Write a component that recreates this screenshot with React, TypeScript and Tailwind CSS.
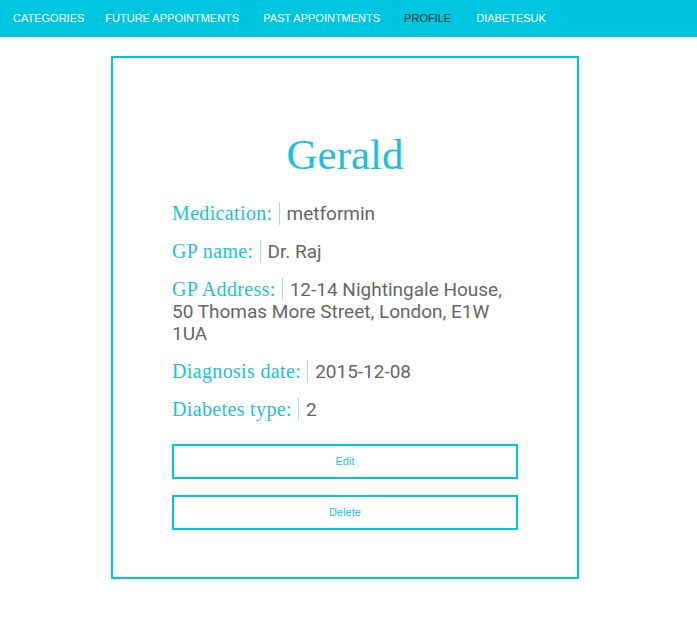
const navItems = [
  { title: "CATEGORIES", active: false, className: "" },
  { title: "FUTURE APPOINTMENTS", active: false, className: "ml-[21px]" },
  { title: "PAST APPOINTMENTS", active: false, className: "ml-[24px]" },
  { title: "PROFILE", active: true, className: "ml-[24px]" },
  { title: "DIABETESUK", active: false, className: "ml-[25px]" },
];

const profile = [
  { label: "Medication:", value: "metformin" },
  { label: "GP name:", value: "Dr. Raj" },
  { label: "GP Address:", value: "12-14 Nightingale House, 50 Thomas More Street, London, E1W 1UA" },
  { label: "Diagnosis date:", value: "2015-12-08" },
  { label: "Diabetes type:", value: "2" },
];

function NavBar() {
  return (
    <nav className="h-[37px] bg-[#00c5de] flex items-center pl-[13px] font-['Liberation_Sans',Arial,sans-serif] text-[11px]">
      {navItems.map((item) => (
        <a
          key={item.title}
          href="#"
          className={(item.active ? "text-[#333] " : "text-white ") + item.className}
        >
          {item.title}
        </a>
      ))}
    </nav>
  );
}

function ProfileRow({ label, value }: { label: string; value: string }) {
  return (
    <div className="mb-[15px] leading-[22px] text-[19px] font-['Roboto',sans-serif]">
      <span className="text-[#1cc0dc] text-[20px] tracking-[0.35px] font-['Liberation_Serif','Times_New_Roman',serif]">
        {label}
      </span>
      <span className="ml-[6px] pl-[7px] border-l border-[#a6dcf0] text-[#666]">{value}</span>
    </div>
  );
}

export default function App() {
  return (
    <div className="min-h-[640px] bg-white">
      <NavBar />
      <div className="mt-[19px] ml-[111px] w-[468px] border-2 border-[#00c5de] px-[59px] pt-[73px] pb-[47px]">
        <h1 className="text-center text-[43px] leading-[48px] text-[#1cc0dc] font-['Liberation_Serif','Times_New_Roman',serif] mb-[23px]">
          Gerald
        </h1>
        {profile.map((row) => (
          <ProfileRow key={row.label} label={row.label} value={row.value} />
        ))}
        <div className="mt-[23px] flex flex-col gap-[16px] font-['Liberation_Sans',Arial,sans-serif]">
          <button className="h-[35px] w-full border-2 border-[#00c5de] text-[#1cc0dc] text-[11px]">Edit</button>
          <button className="h-[35px] w-full border-2 border-[#00c5de] text-[#1cc0dc] text-[11px]">Delete</button>
        </div>
      </div>
    </div>
  );
}
